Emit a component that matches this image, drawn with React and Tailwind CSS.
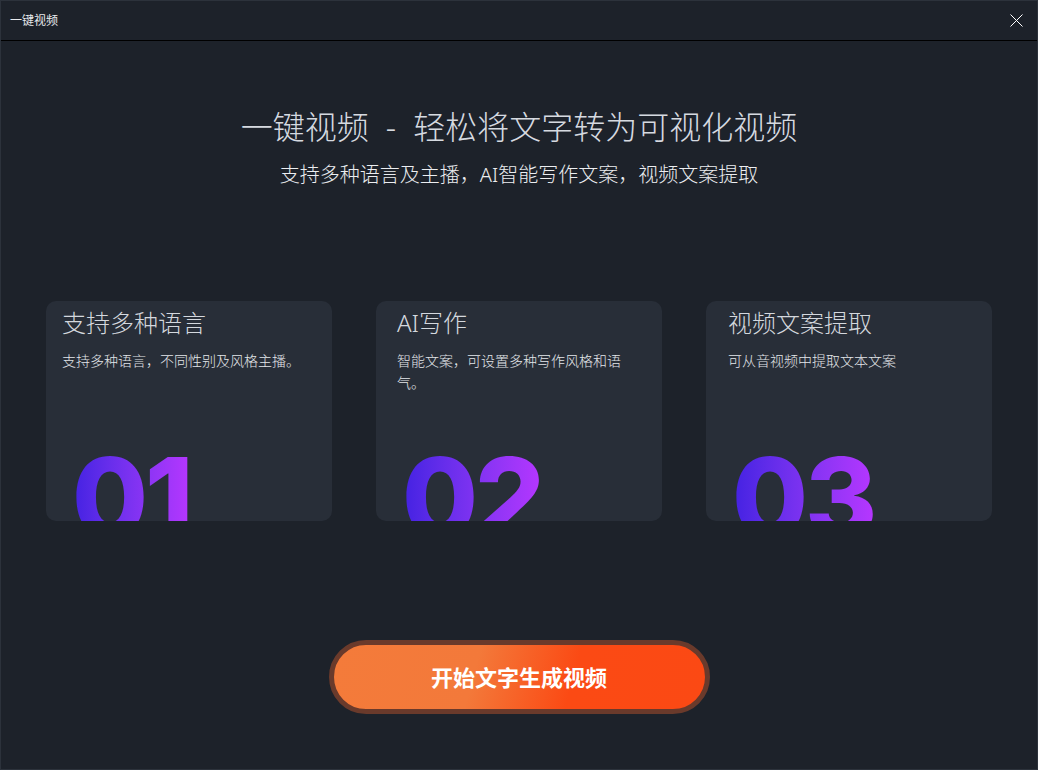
import React from "react";

const cards = [
  { no: "01", title: "支持多种语言", desc: "支持多种语言，不同性别及风格主播。", pad: "pl-[16px]" },
  { no: "02", title: "AI写作", desc: "智能文案，可设置多种写作风格和语气。", pad: "pl-[21px]" },
  { no: "03", title: "视频文案提取", desc: "可从音视频中提取文本文案", pad: "pl-[22px]" },
];

const FeatureCard = ({ card }) => (
  <div className={`relative w-[286px] h-[220px] rounded-[10px] bg-[#282e38] overflow-hidden pr-5 pt-[6px] ${card.pad}`}>
    <h3 className="text-[24px] leading-[32px] font-light text-[#d4d8de]">{card.title}</h3>
    <p className="mt-[11px] text-[14px] leading-[22px] font-light text-[#e3e6ea]">{card.desc}</p>
    <div
      className="absolute left-[26px] top-[141px] text-[110px] leading-none font-extrabold tracking-[-3px] bg-gradient-to-r from-[#4321e2] to-[#b636ff] bg-clip-text text-transparent"
      style={{ fontFamily: "Inter, sans-serif" }}
    >
      {card.no}
    </div>
  </div>
);

const App = () => {
  return (
    <div
      className="w-[1038px] h-[770px] bg-[#1d222a] flex flex-col border border-[#2c323b] overflow-hidden"
      style={{ fontFamily: '"Noto Sans", "Noto Sans CJK SC", sans-serif' }}
    >
      <div className="h-10 flex items-center justify-between pl-[9px] pr-[14px] border-b border-black shrink-0">
        <span className="text-[12px] text-[#e8eaed]">一键视频</span>
        <svg width="13" height="13" viewBox="0 0 13 13" className="text-white">
          <path d="M0.5 0.5 L12.5 12.5 M12.5 0.5 L0.5 12.5" stroke="currentColor" strokeWidth="1" />
        </svg>
      </div>

      <div className="flex flex-col items-center">
        <h1 className="mt-[64px] text-[32px] leading-[44px] font-light text-[#d6dae0]">
          一键视频<span className="mx-[17px]">-</span>轻松将文字转为可视化视频
        </h1>
        <p className="mt-[12px] text-[20px] leading-[28px] font-light text-[#eceef1]">
          支持多种语言及主播，AI智能写作文案，视频文案提取
        </p>

        <div className="mt-[112px] flex gap-[44px]">
          {cards.map((c) => (
            <FeatureCard key={c.no} card={c} />
          ))}
        </div>

        <button className="mt-[119px] w-[381px] h-[74px] rounded-full border-[5px] border-[#6a3a2b] bg-[linear-gradient(105deg,#f47b3a_0%,#f3793a_38%,#fb4a14_64%,#fb4914_100%)] flex items-center justify-center text-white text-[22px] font-bold">
          开始文字生成视频
        </button>
      </div>
    </div>
  );
};

export default App;
